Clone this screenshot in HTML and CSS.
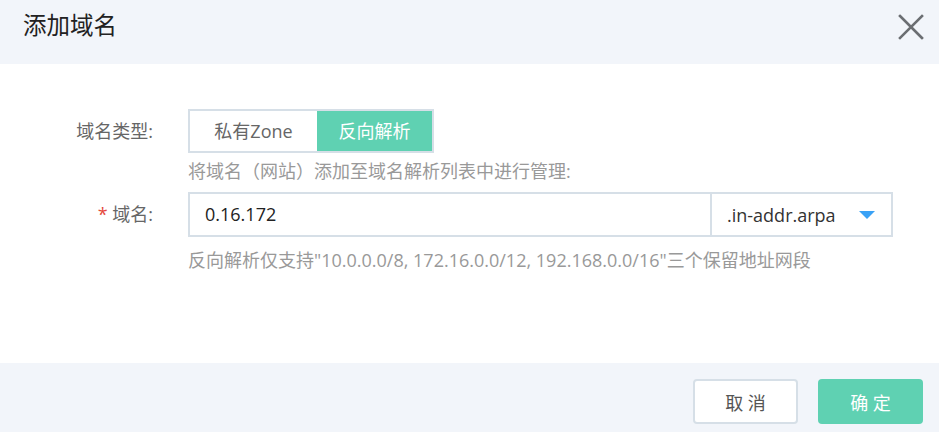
FILE: index.html
```html
<!DOCTYPE html>
<html lang="zh">
<head>
<meta charset="utf-8">
<link rel="stylesheet" href="styles.css">
</head>
<body>
<div class="dialog">
  <div class="header">
    <h1 class="title">添加域名</h1>
    <button class="close" aria-label="close">
      <svg width="26" height="26" viewBox="0 0 26 26"><path d="M2 2L24 24M24 2L2 24" stroke="#6b6e72" stroke-width="2.6" stroke-linecap="square"/></svg>
    </button>
  </div>
  <div class="body">
    <div class="row">
      <div class="label">域名类型:</div>
      <div class="field">
        <div class="toggle">
          <span class="seg">私有Zone</span>
          <span class="seg active">反向解析</span>
        </div>
        <div class="hint hint1">将域名（网站）添加至域名解析列表中进行管理:</div>
      </div>
    </div>
    <div class="row">
      <div class="label"><span class="req">*</span> 域名:</div>
      <div class="field">
        <div class="inputgroup">
          <div class="input">0.16.172</div>
          <div class="select"><span>.in-addr.arpa</span><i class="caret"></i></div>
        </div>
        <div class="hint hint2">反向解析仅支持"10.0.0.0/8, 172.16.0.0/12, 192.168.0.0/16"三个保留地址网段</div>
      </div>
    </div>
  </div>
  <div class="footer">
    <button class="btn cancel">取 消</button>
    <button class="btn ok">确 定</button>
  </div>
</div>
</body>
</html>
```
FILE: styles.css
```css
* { box-sizing: border-box; }
html, body { margin: 0; padding: 0; background: #fff; }
body { font-family: "Open Sans", "Noto Sans CJK SC", sans-serif; }
.dialog { width: 939px; height: 432px; display: flex; flex-direction: column; }
.header { height: 64px; background: #f2f5fa; display: flex; align-items: center; justify-content: space-between; padding: 0 15px 0 23px; }
.title { margin: 0; font-size: 23.5px; font-weight: 400; color: #222; line-height: 1; position: relative; top: -6px; }
.close { background: none; border: 0; padding: 0; width: 26px; height: 26px; position: relative; top: -5px; cursor: pointer; }
.close svg { display: block; }
.body { flex: 1; padding-top: 45px; }
.row { display: grid; grid-template-columns: 153px 1fr; column-gap: 35px; }
.label { font-size: 18px; color: #666; text-align: right; height: 44px; line-height: 44px; white-space: nowrap; }
.req { color: #e4473c; }
.field { display: flex; flex-direction: column; }
.toggle { display: flex; width: 246px; height: 44px; border: 2px solid #d6dfe7; background: #fff; }
.seg { width: 127px; text-align: center; line-height: 40px; font-size: 18px; color: #666; }
.seg.active { width: 115px; background: #5fd1b2; color: #fff; }
.hint { font-size: 18px; color: #999; line-height: 20px; white-space: nowrap; }
.hint1 { padding-top: 8px; height: 39px; }
.hint2 { padding-top: 13px; }
.inputgroup { display: flex; width: 705px; height: 45px; }
.input { width: 522px; border: 2px solid #d6dfe7; border-right: 0; padding-left: 15px; line-height: 41px; font-size: 18px; color: #222; }
.select { flex: 1; border: 2px solid #d6dfe7; display: flex; align-items: center; justify-content: space-between; padding: 0 16px 0 15px; font-size: 18px; color: #333; }
.caret { width: 0; height: 0; border-left: 8.5px solid transparent; border-right: 8.5px solid transparent; border-top: 8px solid #3aa2f6; }
.footer { height: 69px; background: #f2f5fa; display: flex; justify-content: flex-end; align-items: flex-start; gap: 20px; padding: 16px 16px 0 0; }
.btn { width: 105px; height: 45px; border-radius: 4px; font-family: inherit; font-size: 18px; cursor: pointer; }
.cancel { background: #fff; border: 2px solid #d6dfe7; color: #555; }
.ok { background: #5fd1b2; border: 0; color: #fff; }
```
